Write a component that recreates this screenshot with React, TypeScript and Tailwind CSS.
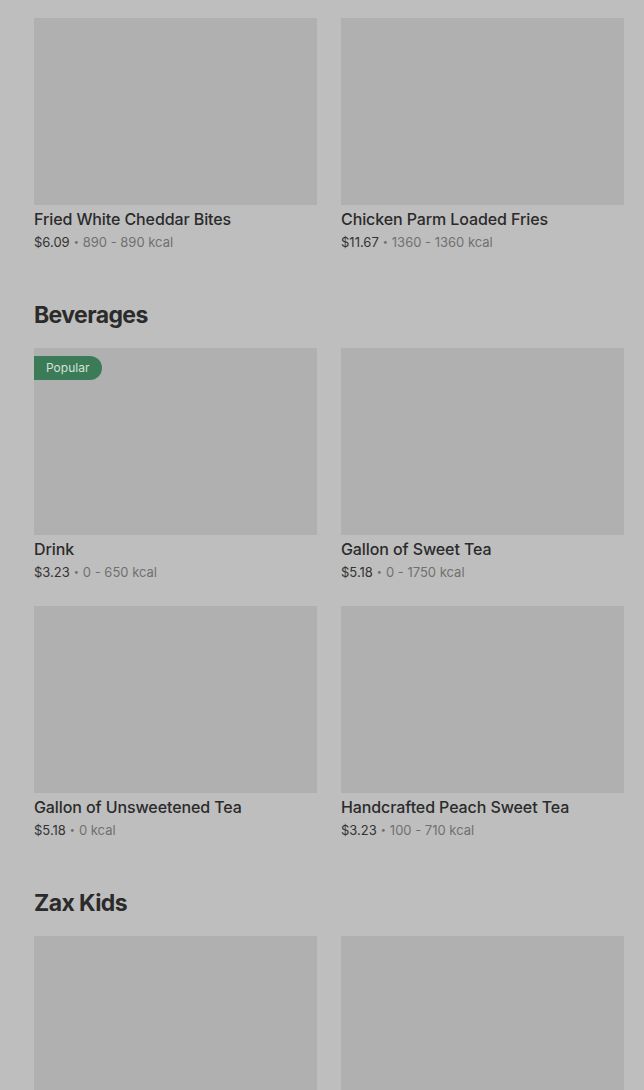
import React from 'react';

type Item = {
  name?: string;
  price?: string;
  kcal?: string;
  popular?: boolean;
};

type Section = {
  title?: string;
  items: Item[];
};

const sections: Section[] = [
  {
    items: [
      { name: 'Fried White Cheddar Bites', price: '$6.09', kcal: '890 - 890 kcal' },
      { name: 'Chicken Parm Loaded Fries', price: '$11.67', kcal: '1360 - 1360 kcal' },
    ],
  },
  {
    title: 'Beverages',
    items: [
      { name: 'Drink', price: '$3.23', kcal: '0 - 650 kcal', popular: true },
      { name: 'Gallon of Sweet Tea', price: '$5.18', kcal: '0 - 1750 kcal' },
      { name: 'Gallon of Unsweetened Tea', price: '$5.18', kcal: '0 kcal' },
      { name: 'Handcrafted Peach Sweet Tea', price: '$3.23', kcal: '100 - 710 kcal' },
    ],
  },
  {
    // os itens daqui ficam abaixo da dobra
    title: 'Zax Kids',
    items: [{}, {}],
  },
];

const MenuCard: React.FC<{ item: Item }> = ({ item }) => (
  <div className="flex flex-col">
    <div className="relative h-[187px] bg-[#b0b0b0]">
      {item.popular && (
        <span className="absolute left-0 top-2 h-6 pl-3 pr-[13px] flex items-center rounded-r-full bg-[#3c7b58] text-[12px] text-[#d3e2d8]">
          Popular
        </span>
      )}
    </div>
    {item.name && (
      <>
        <h4 className="mt-[3px] text-[16px] leading-[22px] font-medium tracking-[-0.1px] text-[#2b2b2b]">{item.name}</h4>
        <p className="mt-[2px] h-5 flex items-center gap-[4px] text-[13px] leading-5 text-[#707070]">
          <span className="text-[#333333]">{item.price}</span>
          <span className="text-[9px] leading-5">•</span>
          <span>{item.kcal}</span>
        </p>
      </>
    )}
  </div>
);

export default function App() {
  return (
    <div
      className="h-[1090px] bg-[#bebebe] pl-[34px] pr-[20px] pt-[18px] overflow-hidden"
      style={{ fontFamily: 'Inter, "Noto Sans", sans-serif' }}
    >
      <div className="flex flex-col gap-[47px]">
        {sections.map((s, i) => (
          <div key={i}>
            {s.title && (
              <h3 className="text-[23px] leading-8 font-bold tracking-[-0.6px] text-[#2b2b2b] mb-[17px]">
                {s.title}
              </h3>
            )}
            <div className="grid grid-cols-2 gap-x-6 gap-y-6">
              {s.items.map((it, j) => (
                <MenuCard key={j} item={it} />
              ))}
            </div>
          </div>
        ))}
      </div>
    </div>
  );
}
